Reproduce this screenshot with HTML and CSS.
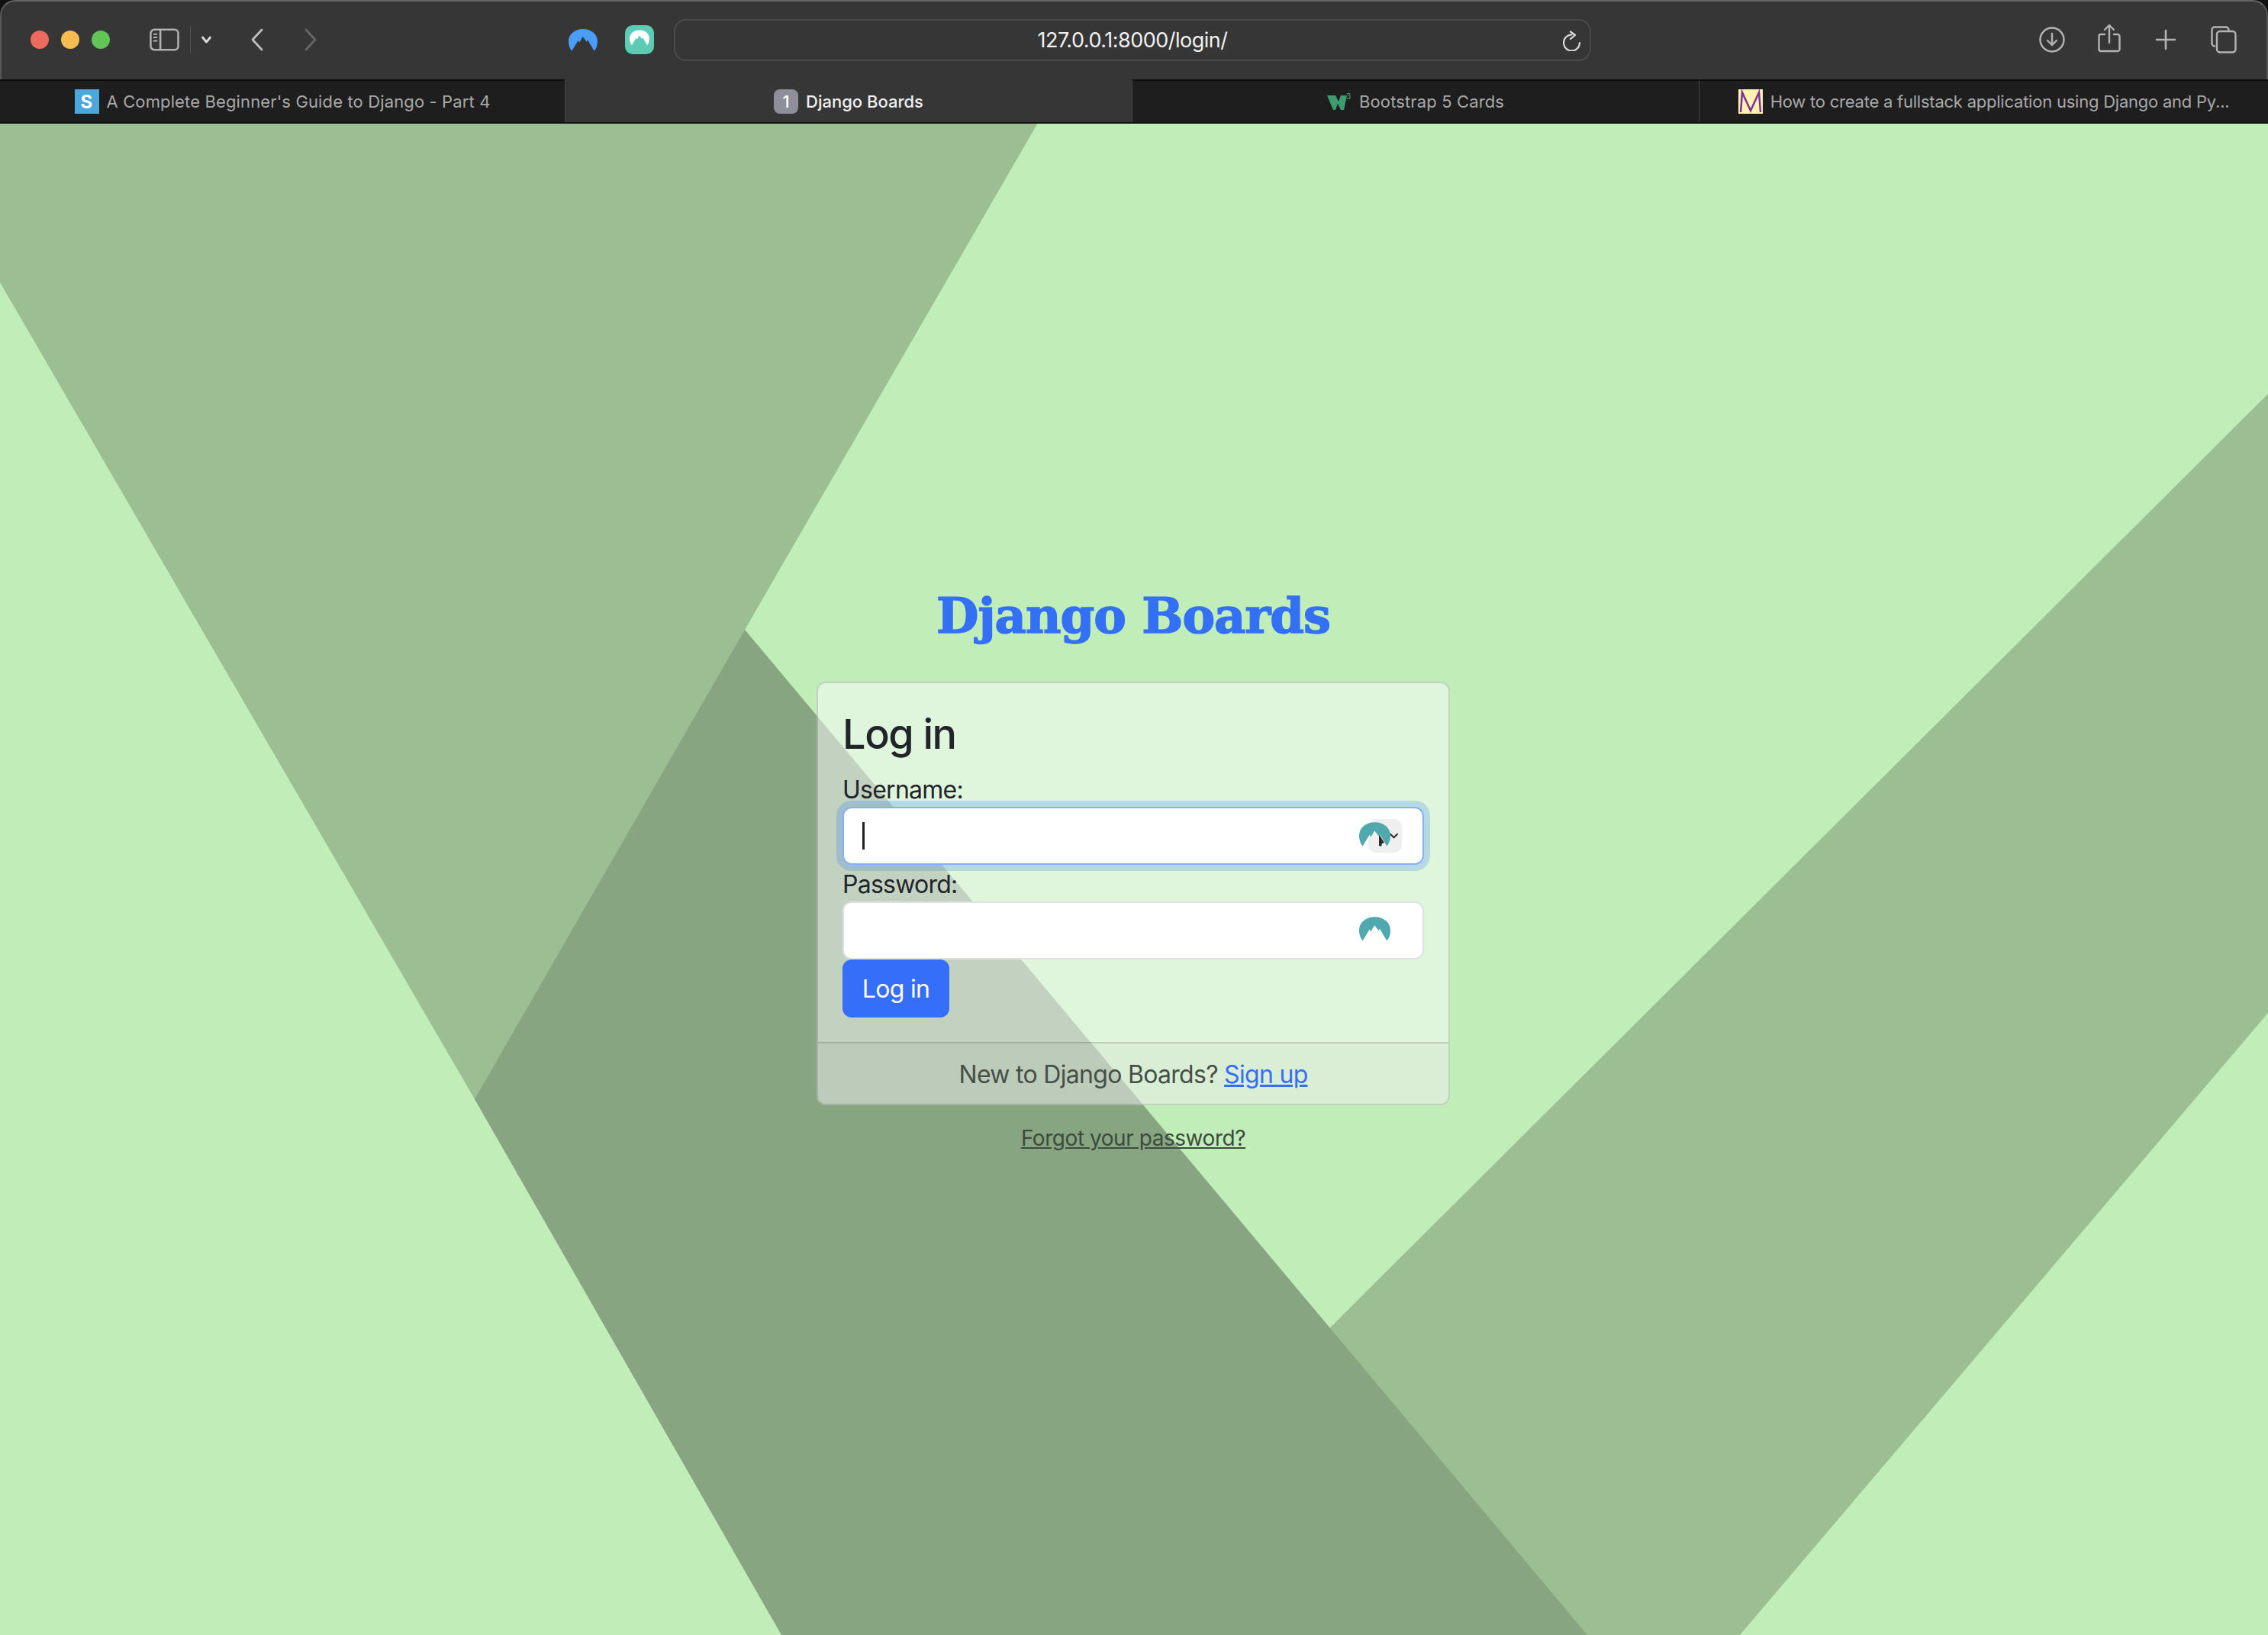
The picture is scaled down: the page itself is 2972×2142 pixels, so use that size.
FILE: index.html
```html
<!DOCTYPE html>
<html lang="en">
<head>
    <meta charset="UTF-8">
    <meta name="viewport" content="width=device-width, initial-scale=1.0">
    <title>Django Boards</title>
    <link rel="stylesheet" href="styles.css">
</head>
<body>
    <div class="window">
        <div class="toolbar">
            <div class="lights">
                <span class="light red"></span>
                <span class="light yellow"></span>
                <span class="light green"></span>
            </div>
            <svg class="ic-sidebar" viewBox="0 0 40 30" fill="none" stroke="#b0b0b0" stroke-width="2.600"><rect x="1.500" y="1.500" width="37" height="27" rx="5"/><path d="M14.500 1.500v27"/><path d="M5 7.500h5.500M5 12h5.500M5 16.500h5.500" stroke-width="2"/></svg>
            <span class="tool-divider"></span>
            <svg class="ic-chevron" viewBox="0 0 14 10" fill="none" stroke="#dcdcdc" stroke-width="2.800" stroke-linecap="round" stroke-linejoin="round"><path d="M2 2l5 6 5-6"/></svg>
            <svg class="ic-back" viewBox="0 0 18 30" fill="none" stroke="#bdbdbd" stroke-width="2.800" stroke-linecap="round" stroke-linejoin="round"><path d="M15 2L3 15l12 13"/></svg>
            <svg class="ic-forward" viewBox="0 0 18 30" fill="none" stroke="#666" stroke-width="2.800" stroke-linecap="round" stroke-linejoin="round"><path d="M3 2l12 13L3 28"/></svg>
            <svg class="ic-nord" viewBox="0 0 38 29"><path fill="#4c9cfb" d="M4.300 28.800C1 25 0 20 0 16 0 7 8 0 19 0s19 7 19 16c0 4-1 9-4.300 12.800L25 14.300l-1.300 2.400-5-6.700-4.400 7.700-1.600-2.700z"/></svg>
            <span class="ic-nordpass">
                <svg viewBox="0 0 38 29"><path fill="#fff" d="M4.300 28.800C1 25 0 20 0 16 0 7 8 0 19 0s19 7 19 16c0 4-1 9-4.300 12.800L25 14.300l-1.300 2.400-5-6.700-4.400 7.700-1.600-2.700z"/></svg>
            </span>
            <div class="urlbar">
                <span class="url">127.0.0.1:8000/login/</span>
                <svg class="ic-reload" viewBox="0 0 24 27" fill="none" stroke="#dcdcdc" stroke-width="2.200" stroke-linecap="round" stroke-linejoin="round"><path d="M11.500 5.500A10.500 10.500 0 1 0 22 16"/><path d="M10 1.500L16 6l-6 5"/></svg>
            </div>
            <div class="tool-right">
                <svg class="ic-download" viewBox="0 0 34 34" fill="none" stroke="#b4b4b4" stroke-width="2.400" stroke-linecap="round" stroke-linejoin="round"><circle cx="17" cy="17" r="15.500"/><path d="M17 9v15M11 18l6 6 6-6"/></svg>
                <svg class="ic-share" viewBox="0 0 30 38" fill="none" stroke="#b4b4b4" stroke-width="2.400" stroke-linecap="round" stroke-linejoin="round"><path d="M15 25V2M9 8l6-6 6 6"/><path d="M9 14H4a2.500 2.500 0 0 0-2.500 2.500v17A2.500 2.500 0 0 0 4 36h22a2.500 2.500 0 0 0 2.500-2.500v-17A2.500 2.500 0 0 0 26 14h-5"/></svg>
                <svg class="ic-plus" viewBox="0 0 28 28" fill="none" stroke="#b4b4b4" stroke-width="2.600" stroke-linecap="round"><path d="M14 2v24M2 14h24"/></svg>
                <svg class="ic-tabs" viewBox="0 0 34 36" fill="none" stroke="#b4b4b4" stroke-width="2.400" stroke-linecap="round" stroke-linejoin="round"><path d="M5 26.500A3.500 3.500 0 0 1 1.500 23V5A3.500 3.500 0 0 1 5 1.500h15A3.500 3.500 0 0 1 23.500 5"/><rect x="8" y="7" width="24.500" height="27.500" rx="4"/></svg>
            </div>
        </div>

        <div class="tabs">
            <div class="tab">
                <span class="favicon fav-s">S</span>
                <span class="tab-title">A Complete Beginner's Guide to Django - Part 4</span>
            </div>
            <div class="tab active">
                <span class="favicon fav-one">1</span>
                <span class="tab-title">Django Boards</span>
            </div>
            <div class="tab">
                <svg class="favicon" viewBox="0 0 32 32"><path fill="#3f9b6f" d="M0 8h11l4 8 3-8h8l-4 19h-4l-4-8-3 8H8z"/><text x="25" y="13" class="fav-three">3</text></svg>
                <span class="tab-title">Bootstrap 5 Cards</span>
            </div>
            <div class="tab tab-long">
                <svg class="favicon" viewBox="0 0 32 32"><rect width="32" height="32" fill="#fdf3b0"/><path fill="none" stroke="#7d2f9c" stroke-width="2.500" d="M3 30L5 4l11 24L27 4l2 26"/></svg>
                <span class="tab-title">How to create a fullstack application using Django and Py...</span>
            </div>
        </div>

        <main class="page">
            <svg class="backdrop" viewBox="0 0 2972 1980" preserveAspectRatio="none">
                <polygon fill="#9bbf93" points="0,-1 1360,-1 976,663 1000,800 660,1278 622,1278 0,208"/>
                <polygon fill="#9bbf93" points="2972,354 1700,1620 1900,1980 2280,1980 2972,1165"/>
                <polygon fill="#86a580" points="976,663 622,1278 1024,1980 2080,1980"/>
            </svg>

            <h1 class="brand">Django Boards</h1>

            <div class="card">
                <div class="card-body">
                    <h3 class="card-title">Log in</h3>
                    <form>
                        <div class="field">
                            <label for="username">Username:</label>
                            <div class="input-wrap">
                                <input id="username" class="input focused" type="text">
                                <span class="caret"></span>
                                <span class="autofill-btn">
                                    <svg viewBox="0 0 14 10" fill="none" stroke="#333" stroke-width="2.400" stroke-linecap="round" stroke-linejoin="round"><path d="M2 2l5 5 5-5"/></svg>
                                </span>
                                <svg class="nord-mark" viewBox="0 0 38 29"><path fill="#4fa9ae" d="M4.300 28.800C1 25 0 20 0 16 0 7 8 0 19 0s19 7 19 16c0 4-1 9-4.300 12.800L25 14.300l-1.300 2.400-5-6.700-4.400 7.700-1.600-2.700z"/></svg>
                                <svg class="pointer" viewBox="0 0 8 16"><path fill="#2b2b2b" d="M1 0l7 11-3 1-1 4-3-1z"/></svg>
                            </div>
                        </div>
                        <div class="field">
                            <label for="password">Password:</label>
                            <div class="input-wrap">
                                <input id="password" class="input" type="password">
                                <svg class="nord-mark" viewBox="0 0 38 29"><path fill="#4fa9ae" d="M4.300 28.800C1 25 0 20 0 16 0 7 8 0 19 0s19 7 19 16c0 4-1 9-4.300 12.800L25 14.300l-1.300 2.400-5-6.700-4.400 7.700-1.600-2.700z"/></svg>
                            </div>
                        </div>
                        <button class="btn" type="button">Log in</button>
                    </form>
                </div>
                <div class="card-footer">New to Django Boards? <a href="#">Sign up</a></div>
            </div>

            <a class="forgot" href="#">Forgot your password?</a>
        </main>
    </div>
</body>
</html>
```

FILE: styles.css
```css
* {
    margin: 0;
    padding: 0;
    box-sizing: border-box;
}

html, body {
    height: 100%;
    overflow: hidden;
    background-color: #111;
}

body {
    font-family: Inter, "Liberation Sans", sans-serif;
}

.window {
    height: 2142px;
    display: flex;
    flex-direction: column;
    overflow: hidden;
    position: relative;
}

/* toolbar */
.toolbar {
    height: 104px;
    flex: none;
    background-color: #363636;
    border: 2px solid #666;
    border-bottom: none;
    border-left-color: #565656;
    border-right-color: #565656;
    border-radius: 20px 20px 0 0;
    display: flex;
    align-items: center;
    padding-bottom: 2px;
}

.toolbar svg {
    display: block;
    flex: none;
}

.lights {
    display: flex;
    gap: 16px;
    margin-left: 38px;
}

.light {
    width: 24px;
    height: 24px;
    border-radius: 50%;
}

.red { background-color: #ee6a5f; }
.yellow { background-color: #f5bd4f; }
.green { background-color: #61c454; }

.ic-sidebar {
    width: 39px;
    height: 30px;
    margin-left: 52px;
}

.tool-divider {
    width: 1px;
    height: 36px;
    margin-left: 14px;
    background-color: #555;
}

.ic-chevron {
    width: 15px;
    height: 10px;
    margin-left: 13px;
}

.ic-back {
    width: 18px;
    height: 30px;
    margin-left: 50px;
}

.ic-forward {
    width: 18px;
    height: 30px;
    margin-left: 52px;
}

.ic-nord {
    width: 38px;
    height: 29px;
    margin-left: 329px;
}

.ic-nordpass {
    width: 38px;
    height: 38px;
    margin-left: 36px;
    border-radius: 10px;
    background-color: #5ccdb4;
    display: flex;
    justify-content: center;
    padding-top: 6px;
}

.ic-nordpass svg {
    width: 26px;
    height: 21px;
}

.urlbar {
    width: 1202px;
    height: 55px;
    margin-left: 26px;
    border: 2px solid #4b4b4b;
    border-radius: 16px;
    display: flex;
    align-items: center;
    justify-content: center;
    position: relative;
}

.url {
    color: #f0f0f0;
    font-size: 27px;
    letter-spacing: -0.5px;
}

.ic-reload {
    position: absolute;
    right: 11px;
    top: 13px;
    width: 24px;
    height: 27px;
}

.tool-right {
    display: flex;
    align-items: center;
    margin-left: 587px;
}

.ic-download { width: 34px; height: 34px; }
.ic-share { width: 30px; height: 38px; margin-left: 43px; margin-top: -4px; }
.ic-plus { width: 28px; height: 28px; margin-left: 45px; }
.ic-tabs { width: 34px; height: 36px; margin-left: 45px; }

/* tab strip */
.tabs {
    height: 58px;
    flex: none;
    display: grid;
    grid-template-columns: 740px 743px 743px 1fr;
    background-color: #1e1e1e;
    border-bottom: 2px solid #111;
}

.tab {
    display: flex;
    align-items: center;
    justify-content: center;
    gap: 10px;
    border-top: 2px solid #0c0c0c;
    border-left: 1px solid #444;
    color: #a8a8a8;
    font-size: 22px;
    letter-spacing: 0.13px;
    white-space: nowrap;
}

.tab:first-child {
    border-left: none;
}

.tab.active {
    background-color: #363636;
    border-top-color: #363636;
    color: #efefef;
    font-weight: 500;
    letter-spacing: 0;
}

.tab-long {
    letter-spacing: -0.23px;
}

.favicon {
    width: 32px;
    height: 32px;
    flex: none;
    display: flex;
    align-items: center;
    justify-content: center;
    font-weight: 700;
}

.fav-s {
    background-color: #4ba8da;
    color: #fff;
    font-size: 24px;
}

.fav-one {
    background-color: #8f8f9b;
    border-radius: 8px;
    color: #fff;
    font-size: 22px;
    font-weight: 500;
}

.fav-three {
    fill: #3f9b6f;
    font-size: 10px;
    font-weight: 500;
}

/* login page */
.page {
    flex: 1;
    position: relative;
    background-color: #c0edb8;
    display: flex;
    flex-direction: column;
    align-items: center;
    padding: 606px 2px 0 0;
}

.backdrop {
    position: absolute;
    left: 0;
    top: 0;
    width: 100%;
    height: 100%;
}

.brand {
    position: relative;
    font-family: "DejaVu Serif", serif;
    font-size: 64px;
    font-weight: 700;
    line-height: 78px;
    letter-spacing: -1px;
    color: #3470f6;
    -webkit-text-stroke: 1.5px #3470f6;
    margin-bottom: 47px;
}

.card {
    position: relative;
    width: 830px;
    background-color: rgba(255, 255, 255, 0.5);
    border: 2px solid rgba(0, 0, 0, 0.14);
    border-radius: 12px;
    overflow: hidden;
}

.card-body {
    padding: 34px 32px 32px;
}

.card-title {
    font-size: 54px;
    font-weight: 500;
    line-height: 66px;
    letter-spacing: -1.4px;
    color: #212529;
    margin-bottom: 14px;
}

.field label {
    display: block;
    font-size: 32px;
    letter-spacing: -0.75px;
    line-height: 51px;
    height: 48px;
    color: #212529;
}

.input-wrap {
    position: relative;
    height: 76px;
    width: 762px;
}

.input {
    display: block;
    width: 100%;
    height: 100%;
    border: 2px solid #dee2e6;
    border-radius: 12px;
    background-color: #fff;
    outline: none;
    caret-color: transparent;
}

.input.focused {
    border-color: #86b0fa;
    box-shadow: 0 0 0 8px rgba(13, 110, 253, 0.2);
}

.caret {
    position: absolute;
    left: 26px;
    top: 20px;
    width: 3px;
    height: 36px;
    background-color: #222;
}

.autofill-btn {
    position: absolute;
    left: 689px;
    top: 16px;
    width: 44px;
    height: 44px;
    border-radius: 10px;
    background-color: #efefef;
    display: flex;
    align-items: center;
    justify-content: flex-end;
    padding-right: 4px;
}

.autofill-btn svg {
    width: 13px;
    height: 9px;
}

.nord-mark {
    position: absolute;
    left: 677px;
    top: 20px;
    width: 41px;
    height: 32px;
}

.pointer {
    position: absolute;
    left: 702px;
    top: 36px;
    width: 8px;
    height: 16px;
}

.btn {
    display: block;
    width: 140px;
    height: 76px;
    border: none;
    border-radius: 12px;
    background-color: #356ef8;
    color: #fff;
    font-family: inherit;
    font-size: 32px;
    letter-spacing: -0.7px;
}

.card-footer {
    height: 81px;
    border-top: 2px solid rgba(0, 0, 0, 0.14);
    background-color: rgba(0, 0, 0, 0.03);
    color: #465047;
    font-size: 32px;
    letter-spacing: -0.7px;
    line-height: 81px;
    text-align: center;
}

.card-footer a {
    color: #356ef8;
}

.forgot {
    position: relative;
    margin-top: 23px;
    color: #3d4a3e;
    font-size: 28px;
    letter-spacing: -0.45px;
    line-height: 40px;
}
```
